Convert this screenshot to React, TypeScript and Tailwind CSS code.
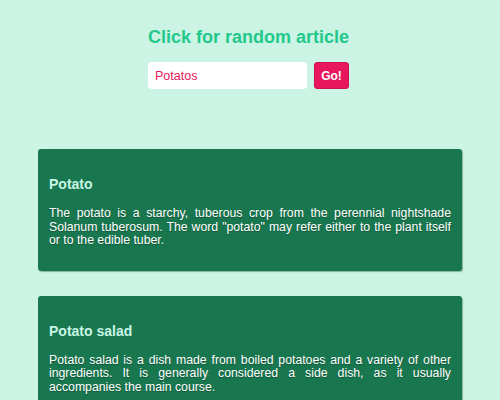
import { useState } from "react";

const articles = [
  {
    title: "Potato",
    text: 'The potato is a starchy, tuberous crop from the perennial nightshade Solanum tuberosum. The word "potato" may refer either to the plant itself or to the edible tuber.',
  },
  {
    title: "Potato salad",
    text: "Potato salad is a dish made from boiled potatoes and a variety of other ingredients. It is generally considered a side dish, as it usually accompanies the main course.",
  },
];

export default function App() {
  const [query, setQuery] = useState("Potatos");

  return (
    <div className="min-h-screen bg-[#cbf4e5] font-['Liberation_Sans',Arial,sans-serif] pt-[27px]">
      <h1 className="text-center text-[18px] leading-[21px] font-bold text-[#22c98a] -ml-[3px]">
        Click for random article
      </h1>

      <div className="flex justify-center gap-[7px] mt-[14px] -ml-[3px]">
        <input
          value={query}
          onChange={(e) => setQuery(e.target.value)}
          className="w-[159px] h-[27px] bg-white rounded-[4px] px-[7px] text-[12.5px] text-[#e8175d] outline-none"
        />
        <button className="w-[35px] h-[27px] bg-[#e8175d] border border-[#c9124f] rounded-[3px] text-white text-[12px] font-bold">
          Go!
        </button>
      </div>

      <div className="mt-[60px] mx-[38px] flex flex-col gap-[25px]">
        {articles.map((a) => (
          <div
            key={a.title}
            className="bg-[#19774f] rounded-[3px] shadow-[1px_1px_1px_rgba(0,60,30,0.35)] px-[11px] pt-[27px] pb-[23px]"
          >
            <h3 className="text-[14px] leading-[16px] font-bold text-[#c8f5e3]">
              {a.title}
            </h3>
            <p className="mt-[15px] text-[12.25px] leading-[13.5px] text-white text-justify [text-shadow:0_1px_1px_rgba(0,0,0,0.3)]">
              {a.text}
            </p>
          </div>
        ))}
      </div>
    </div>
  );
}
